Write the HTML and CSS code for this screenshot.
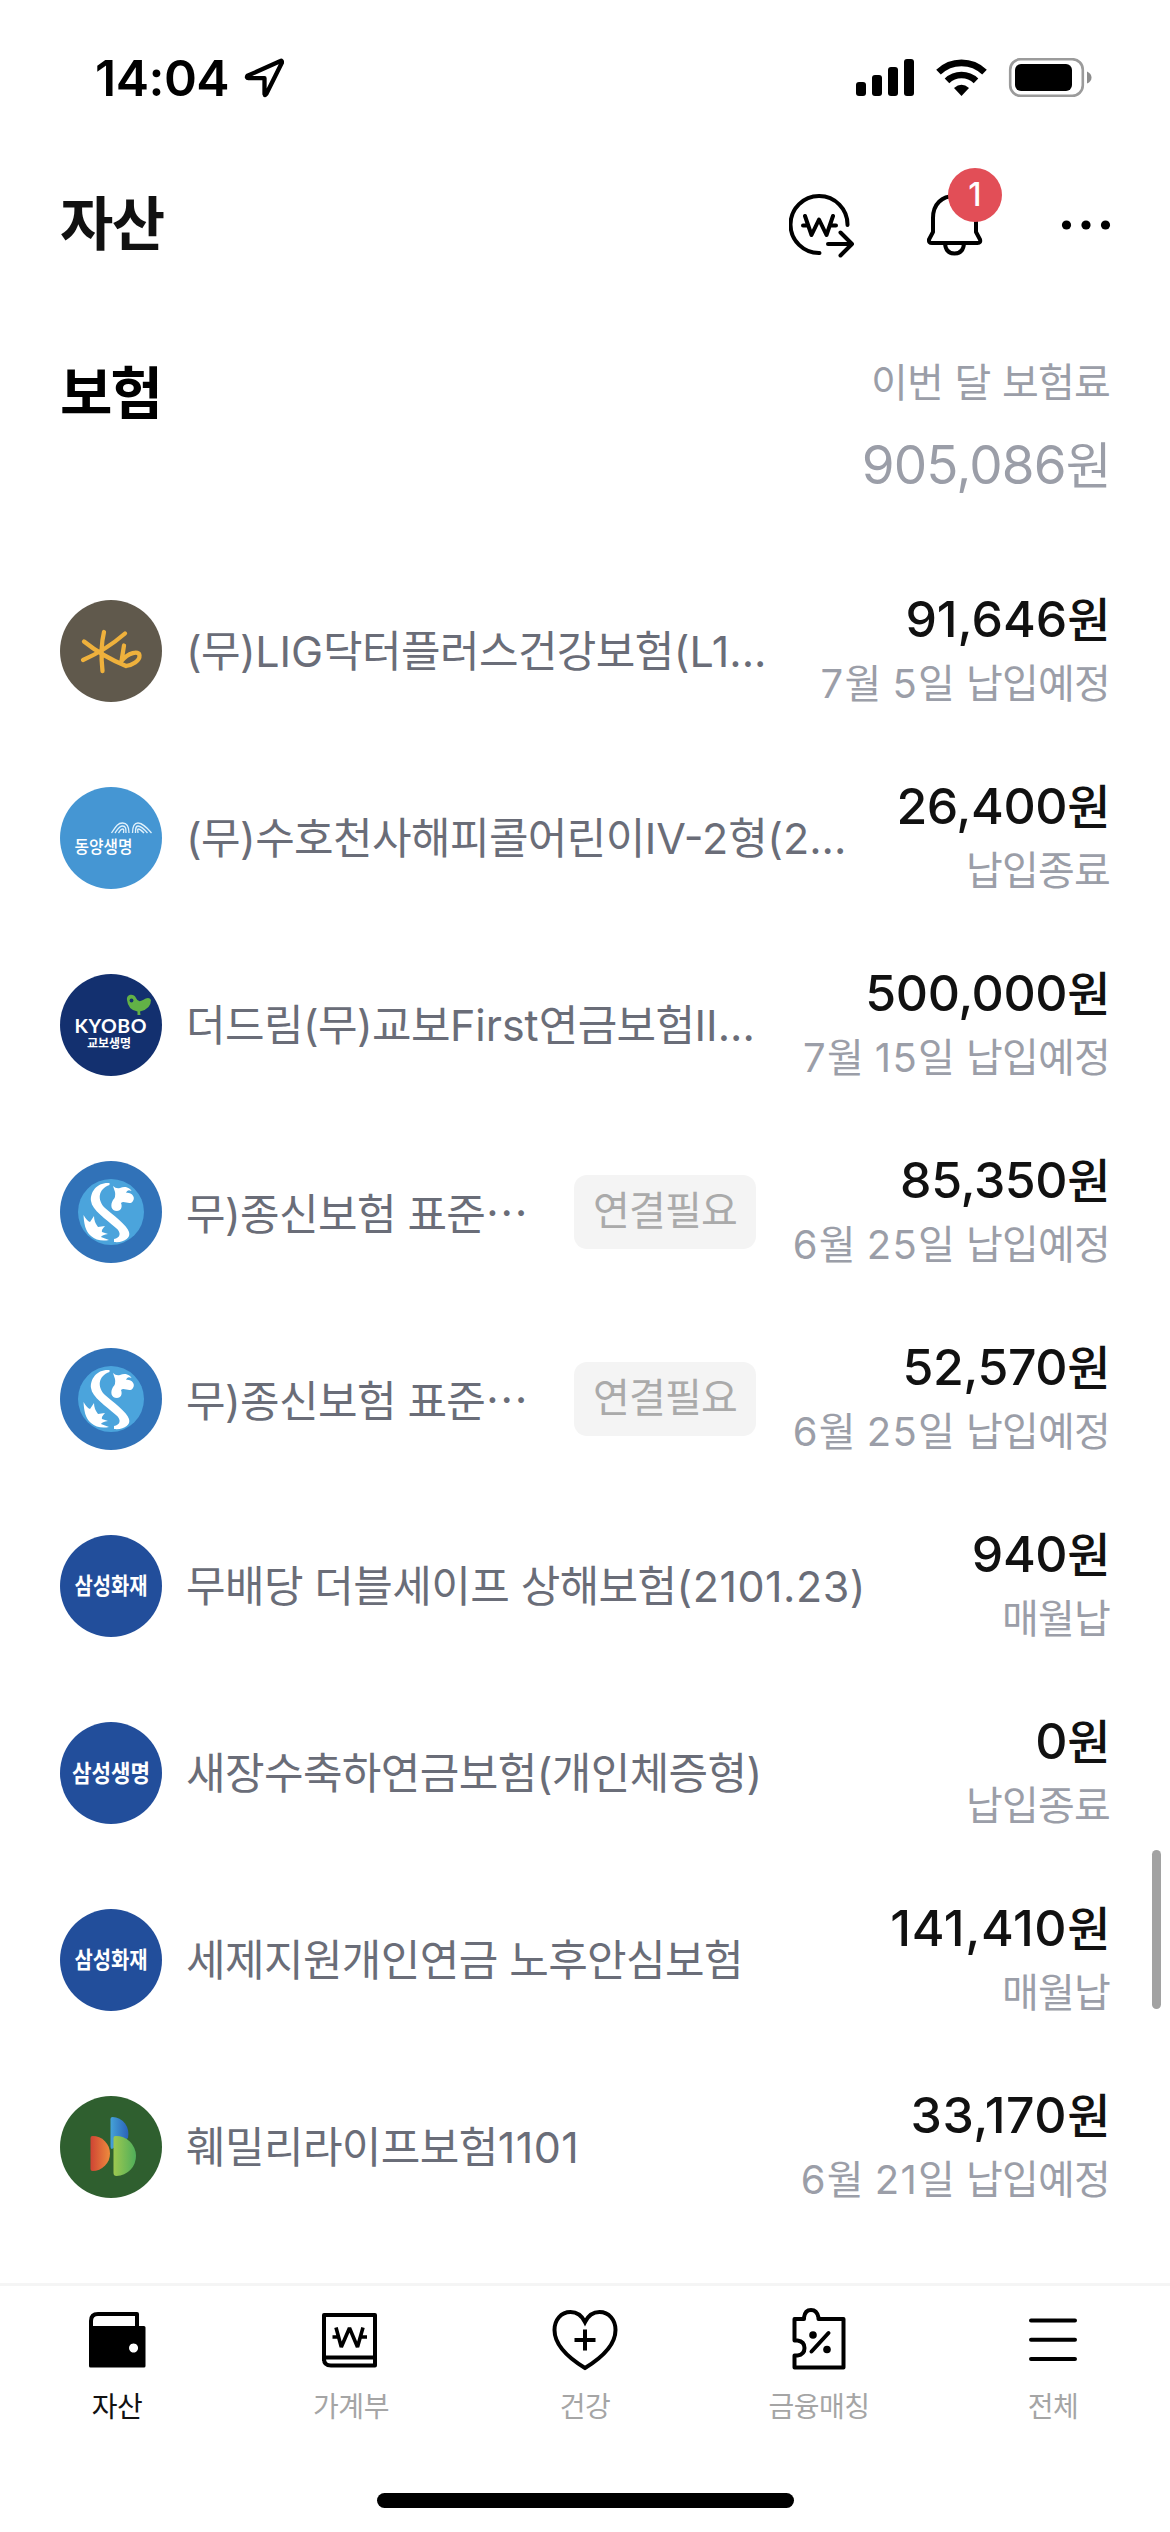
FILE: index.html
```html
<!DOCTYPE html>
<html lang="ko">
<head>
<meta charset="utf-8">
<title>자산</title>
<link rel="stylesheet" href="styles.css">
</head>
<body>
<div class="screen">
  <div class="status">
    <div class="clock">14:04</div>
    <svg class="locate" width="40" height="40" viewBox="0 0 40 40"><path d="M36.500 3 3.500 17.800Q2 20 4.500 20.200H20.500V36Q21 38.200 22.300 36L38 4.500Q38 2.200 36.500 3Z" fill="none" stroke="#000" stroke-width="4.300" stroke-linejoin="round"/></svg>
    <svg class="signals" width="238" height="40" viewBox="0 0 238 40">
      <rect x="0" y="24" width="10" height="14" rx="3"/><rect x="16" y="17" width="10" height="21" rx="3"/><rect x="32" y="9" width="10" height="29" rx="3"/><rect x="48" y="1" width="10" height="37" rx="3"/>
      <path d="M82.500 14.200a33 33 0 0 1 46 0M91 22.800a21 21 0 0 1 29 0" fill="none" stroke="#000" stroke-width="6.600"/>
      <path d="M105.500 38 98 30q7.500-6.500 15 0z"/>
      <rect x="154.200" y="1.200" width="72.600" height="36.600" rx="10.500" fill="none" stroke="#9b9b9b" stroke-width="2.600"/>
      <rect x="159" y="6" width="57" height="27" rx="6"/>
      <path d="M231 13.500q4.500 2 4.500 6t-4.500 6z" fill="#8c8c8c"/>
    </svg>
  </div>

  <header class="topbar">
    <h1>자산</h1>
    <div class="actions">
      <svg class="a-won" width="66" height="66" viewBox="0 0 66 66" fill="none" stroke="#000" stroke-width="4" stroke-linecap="round" stroke-linejoin="round"><path d="M58.500 31a28.500 28.500 0 1 0-28 28M16 22l6.500 19L30 25.500 37.500 41 44 22M14 31.500h5M42 31.500h5M39 50h24M51.500 38.500 63 50 51.500 61.500"/></svg>
      <div class="bell">
        <svg width="56" height="62" viewBox="0 0 56 62" fill="none" stroke="#000" stroke-width="4" stroke-linejoin="round"><path d="M6 24C6 10 15 2 27.500 2S49 10 49 24V38L53 45.500Q54 49 50.500 49H5Q1.500 49 2 45.500L6 38ZM18 49Q18.500 59.500 27.500 59.500T37 49"/></svg>
        <span class="count">1</span>
      </div>
      <svg class="a-dots" width="50" height="10" viewBox="0 0 50 10"><circle cx="5.500" cy="5" r="4.600"/><circle cx="25" cy="5" r="4.600"/><circle cx="44.500" cy="5" r="4.600"/></svg>
    </div>
  </header>

  <section class="summary">
    <h2>보험</h2>
    <div class="monthly"><p class="caption">이번 달 보험료</p><p class="total">905,086<span class="won">원</span></p></div>
  </section>

  <ul class="list">
    <li class="row">
      <svg class="logo" viewBox="0 0 102 102"><circle cx="51" cy="51" r="51" fill="#60594c"/><g fill="none" stroke="#efb13c" stroke-width="4.300" stroke-linecap="round" stroke-linejoin="round"><path d="M44 32Q40 48 42.500 71M24 41.500Q42 56 66 66M23 60Q46 50 65 33.500M64 45.500 61.500 61C68 53 79 50 79.500 55.500C80 61 72 65 66 66"/></g></svg>
      <p class="name">(무)<span class="en">LIG</span>닥터플러스건강보험<span class="en">(L1...</span></p>
      <div class="pay"><p class="amount one">91,646<span class="won">원</span></p><p class="due"><b>7</b>월 <b>5</b>일 납입예정</p></div>
    </li>
    <li class="row">
      <svg class="logo" viewBox="0 0 102 102"><circle cx="51" cy="51" r="51" fill="#4596d3"/><text x="14.500" y="65.500" class="lt" font-size="17.500" textLength="58" lengthAdjust="spacingAndGlyphs" fill="#fff">동양생명</text><g fill="none" stroke="#dff0fb" stroke-width="1.300"><path d="M51.500 46C55 41 57 36 62.500 36S69 41 69 46M55 46C58 42 59 39 62.500 39S66 42 66 46M58.500 46C60 44 60.500 42 62.500 42S63.500 44 63.500 46M72.500 46C72.500 41 73 36 78 36S87 41 91.500 46M75.500 46C75.500 42 75.500 39 78 39S84 42 87.500 46M78 46C78 44 77 42 78.500 42S82 44 84 46"/></g></svg>
      <p class="name">(무)수호천사해피콜어린이<span class="en">IV-2</span>형<span class="en">(2...</span></p>
      <div class="pay"><p class="amount">26,400<span class="won">원</span></p><p class="due">납입종료</p></div>
    </li>
    <li class="row">
      <svg class="logo" viewBox="0 0 102 102"><circle cx="51" cy="51" r="51" fill="#13306f"/><path d="M67 26C66 20 74 19 76 24Q78 29 83 26Q89 22 91 26Q91 35 80 37.500L80.500 41H77.500V37.500Q68 36 67 26Z" fill="#62b146"/><circle cx="71.500" cy="26.500" r="1.900" fill="#13306f"/><text x="14.500" y="58.700" class="lat" font-size="19.500" textLength="72" lengthAdjust="spacing" fill="#fff">KYOBO</text><text x="27" y="74" class="lb" font-size="12.500" textLength="44" lengthAdjust="spacingAndGlyphs" fill="#fff">교보생명</text></svg>
      <p class="name">더드림(무)교보<span class="en">First</span>연금보험<span class="en">II...</span></p>
      <div class="pay"><p class="amount">500,000<span class="won">원</span></p><p class="due"><b>7</b>월 <b>15</b>일 납입예정</p></div>
    </li>
    <li class="row">
      <svg class="logo" viewBox="0 0 102 102"><circle cx="51" cy="51" r="51" fill="#3172b8"/><circle cx="51" cy="51" r="33" fill="#4ba4dc"/><path id="dragon" d="M49.500 22C37 21 30 31 31 40C32 49 46 58 56 67C62 72 60 77 54 78V81C64 82 71 77 69 71C67 64 53 54 45 47C37 39 38 28 49.500 24ZM53 25Q56 28 60 27C66 24 71 28 71.500 30Q67 28 66 32C71 31 76 36 73 40C70 45 64 39 61 42C63 47 60 50 57 50C51 50 50 44 53 39Q56 36 55 31ZM23.500 54Q27 60 30 61L34 55Q34 61 38 66L45 65Q41 69 42 71L48 73Q42 74 41 76L49 79Q38 81 31 75C25 70 24 62 23.500 54Z" fill="#fff"/></svg>
      <p class="name">무)종신보험 표준<span class="mid">⋯</span></p>
      <span class="tag">연결필요</span>
      <div class="pay"><p class="amount">85,350<span class="won">원</span></p><p class="due"><b>6</b>월 <b>25</b>일 납입예정</p></div>
    </li>
    <li class="row">
      <svg class="logo" viewBox="0 0 102 102"><circle cx="51" cy="51" r="51" fill="#3172b8"/><circle cx="51" cy="51" r="33" fill="#4ba4dc"/><use href="#dragon"/></svg>
      <p class="name">무)종신보험 표준<span class="mid">⋯</span></p>
      <span class="tag">연결필요</span>
      <div class="pay"><p class="amount">52,570<span class="won">원</span></p><p class="due"><b>6</b>월 <b>25</b>일 납입예정</p></div>
    </li>
    <li class="row">
      <svg class="logo" viewBox="0 0 102 102"><circle cx="51" cy="51" r="51" fill="#224e9b"/><text x="14.500" y="59" class="lb" font-size="23" textLength="73" lengthAdjust="spacingAndGlyphs" fill="#fff">삼성화재</text></svg>
      <p class="name">무배당 더블세이프 상해보험<span class="num">(2101.23)</span></p>
      <div class="pay"><p class="amount">940<span class="won">원</span></p><p class="due">매월납</p></div>
    </li>
    <li class="row">
      <svg class="logo" viewBox="0 0 102 102"><circle cx="51" cy="51" r="51" fill="#224e9b"/><text x="12" y="60" class="lb" font-size="24" textLength="78" lengthAdjust="spacingAndGlyphs" fill="#fff">삼성생명</text></svg>
      <p class="name">새장수축하연금보험(개인체증형)</p>
      <div class="pay"><p class="amount">0<span class="won">원</span></p><p class="due">납입종료</p></div>
    </li>
    <li class="row">
      <svg class="logo" viewBox="0 0 102 102"><circle cx="51" cy="51" r="51" fill="#224e9b"/><text x="14.500" y="59" class="lb" font-size="23" textLength="73" lengthAdjust="spacingAndGlyphs" fill="#fff">삼성화재</text></svg>
      <p class="name">세제지원개인연금 노후안심보험</p>
      <div class="pay"><p class="amount ones">141,410<span class="won">원</span></p><p class="due">매월납</p></div>
    </li>
    <li class="row">
      <svg class="logo" viewBox="0 0 102 102"><defs><linearGradient id="go"><stop offset="0" stop-color="#cf4434"/><stop offset="1" stop-color="#ee8b3d"/></linearGradient><linearGradient id="gb"><stop offset="0" stop-color="#45a2d8"/><stop offset="1" stop-color="#2a62b8"/></linearGradient><linearGradient id="gg"><stop offset="0" stop-color="#9dc850"/><stop offset="1" stop-color="#4fae5a"/></linearGradient></defs><circle cx="51" cy="51" r="51" fill="#2f5f2f"/><path d="M50.500 23Q50.500 21 52.500 21A16 17 0 0 1 68 42L52 53Q50.500 53 50.500 50Z" fill="url(#gb)"/><path d="M30.500 42Q30.500 40 32.500 40A17.500 17.500 0 0 1 32.500 75Q30.500 75 30.500 73Z" fill="url(#go)"/><path d="M53.500 42Q53.500 40 55.500 40A20 20 0 0 1 56.500 80Q53.500 80 53.500 77Z" fill="url(#gg)"/></svg>
      <p class="name">훼밀리라이프보험<span class="num">1101</span></p>
      <div class="pay"><p class="amount ones">33,170<span class="won">원</span></p><p class="due"><b>6</b>월 <b>21</b>일 납입예정</p></div>
    </li>
  </ul>
  <div class="scrollbar"></div>

  <nav class="tabs">
    <div class="tab on"><svg viewBox="0 0 66 66"><path d="M7 22V14Q7 7 14 7H53V22" fill="none" stroke="#000" stroke-width="4" stroke-linejoin="round"/><path d="M5 19H60Q61.500 19 61.500 20.500V59Q61.500 60.500 60 60.500H6.500Q5 60.500 5 59ZM49.500 36.500a4.500 4.500 0 1 0 .1 0Z" fill-rule="evenodd"/></svg><span>자산</span></div>
    <div class="tab"><svg viewBox="0 0 66 66" fill="none" stroke="#000" stroke-width="4" stroke-linejoin="round"><path d="M6 54V8H57V58.500H13Q6 58.500 6 52Q6 50.500 8 50.500H57"/><path d="M18 20.500 23.300 40 31.500 21 39.500 40 45 20.500M14.500 30h6M43 30h6" stroke-width="3.600" stroke-linejoin="bevel"/></svg><span>가계부</span></div>
    <div class="tab"><svg viewBox="0 0 66 66" fill="none" stroke="#000" stroke-width="4"><path d="M33 15C29 7 24 5 18.500 5C9 5 2.500 13 2.500 23C2.500 37 15 50 33 61C51 50 63.500 37 63.500 23C63.500 13 57 5 47.500 5C42 5 37 7 33 15Z"/><path d="M33 22.500V43.500M22.500 33H43.500"/></svg><span>건강</span></div>
    <div class="tab"><svg viewBox="0 0 66 66" fill="none" stroke="#000" stroke-width="4" stroke-linejoin="round" stroke-linecap="round"><path d="M8.500 12H18V10.500Q19 3 25 3T32.500 10.500V12H57.500V60.500H8.500V48.500H11.500Q18.500 47.500 18.500 41T11.500 33.500H8.500Z"/><path d="M42.500 26 25.500 44.500"/><g fill="#000" stroke="none"><circle cx="27" cy="28" r="3.800"/><circle cx="41" cy="42.500" r="3.800"/></g></svg><span>금융매칭</span></div>
    <div class="tab"><svg viewBox="0 0 66 66" stroke="#000" stroke-width="4" stroke-linecap="round"><path d="M11 13.500H55M11 32.700H55M11 52H55"/></svg><span>전체</span></div>
  </nav>
  <div class="home"><i></i></div>
</div>
</body>
</html>
```

FILE: styles.css
```css
* { box-sizing: border-box; margin: 0; padding: 0; }
body { background: #fff; font-family: Inter, "Noto Sans CJK KR", sans-serif; color: #111; }
.screen { position: relative; width: 1170px; height: 2532px; overflow: hidden; display: flex; flex-direction: column; background: #fff; }

.status { height: 156px; padding: 58px 76px 0 95px; display: flex; align-items: flex-start; }
.clock { width: 149px; font-size: 50px; line-height: 40px; font-weight: 600; letter-spacing: -0.5px; color: #000; white-space: nowrap; }
.signals { margin-left: auto; }

.topbar { height: 174px; padding: 0 60px; display: flex; justify-content: space-between; }
h1 { font-size: 58px; line-height: 80px; margin-top: 28px; font-weight: 700; letter-spacing: -1.5px; }
.actions { display: flex; align-items: flex-start; }
.a-won { margin: 38px 72px 0 0; }
.bell { position: relative; width: 56px; height: 62px; margin: 38px 78px 0 0; }
.count { position: absolute; left: 21px; top: -26px; width: 54px; height: 54px; border-radius: 50%; background: #e24e57; color: #fff; font-size: 32px; line-height: 54px; font-weight: 500; text-align: center; }
.a-dots { margin-top: 64px; margin-right: -1px; }

.summary { height: 227.5px; padding: 24px 60px 0; display: flex; justify-content: space-between; }
h2 { font-size: 57px; line-height: 80px; font-weight: 700; letter-spacing: -2px; color: #000; }
.monthly { text-align: right; color: #9b9ea8; }
.caption { font-size: 40px; line-height: 56px; margin-top: 1px; letter-spacing: -0.8px; word-spacing: 1px; }
.total { font-size: 53px; line-height: 70px; margin: 19px -1px 0 0; letter-spacing: -0.9px; }
.won { font-size: 0.94em; letter-spacing: -0.5px; }

.list { list-style: none; height: 1725.5px; flex: none; }
.row { height: 187px; padding: 0 60px; display: flex; align-items: center; }
.logo { width: 102px; height: 102px; flex: none; overflow: visible; }
.lt, .lb { font-family: "Noto Sans CJK KR", sans-serif; font-weight: 500; }
.lb { font-weight: 700; }
.lat { font-family: Lato, sans-serif; font-weight: 700; }
.name { margin-left: 24px; font-size: 43px; line-height: 60px; letter-spacing: -0.6px; color: #6a6d78; white-space: nowrap; }
.name .en { letter-spacing: 0; }
.name .num { letter-spacing: 0.5px; }
.mid { font-family: "Noto Sans CJK KR", sans-serif; }
.tag { margin-left: auto; width: 182px; height: 74px; border-radius: 13px; background: #f4f4f4; color: #aaa; font-size: 40px; line-height: 72px; text-align: center; letter-spacing: -0.8px; }
.pay { margin-left: auto; text-align: right; white-space: nowrap; }
.tag + .pay { width: 354px; margin-left: 0; }
.amount { font-size: 50px; line-height: 64px; font-weight: 500; color: #111; letter-spacing: -0.4px; }
.amount.one { letter-spacing: 0; }
.amount.ones { letter-spacing: 0.6px; }
.amount .won { letter-spacing: -0.5px; }
.due { font-size: 40px; line-height: 64px; letter-spacing: -0.8px; word-spacing: 1.5px; color: #9b9ea8; }
.due b { font-weight: 400; letter-spacing: 1.3px; }

.scrollbar { position: absolute; left: 1152px; top: 1850px; width: 9px; height: 159px; border-radius: 5px; background: #a2a2a2; }

.tabs { height: 187px; border-top: 3px solid #f5f5f5; display: flex; flex: none; }
.tab { width: 234px; padding-top: 21px; display: flex; flex-direction: column; align-items: center; color: #a5a5a5; }
.tab svg { width: 66px; height: 66px; }
.tab span { margin-top: 14px; font-size: 28px; line-height: 40px; letter-spacing: -0.5px; }
.tab.on { color: #111; }
.home { padding-top: 23px; display: flex; justify-content: center; }
.home i { width: 417px; height: 15px; border-radius: 8px; background: #000; }
```
